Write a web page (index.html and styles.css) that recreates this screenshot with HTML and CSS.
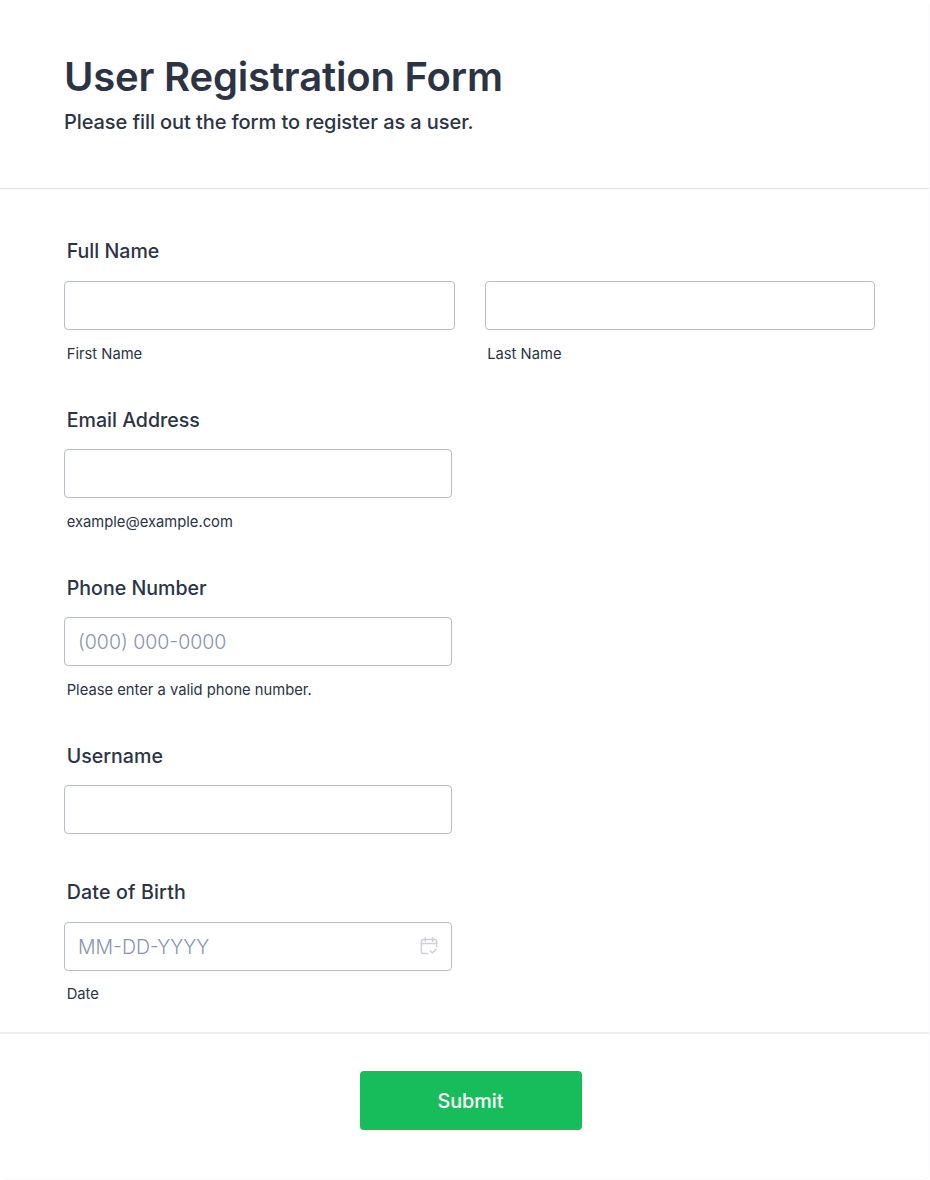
FILE: index.html
```html
<!DOCTYPE html>
<html lang="en">
<head>
    <meta charset="UTF-8">
    <meta name="viewport" content="width=device-width, initial-scale=1.0">
    <title>User Registration Form</title>
    <link rel="stylesheet" href="styles.css">
</head>
<body>
	<form class="form-card">
		<div class="form-header">
			<h1>User Registration Form</h1>
			<p>Please fill out the form to register as a user.</p>
		</div>

		<div class="form-body">
			<!-- name -->
			<div class="field first">
				<label class="field-label">Full Name</label>
				<div class="name-row">
					<div class="name-col">
						<input type="text" class="text-input">
						<span class="sub-label">First Name</span>
					</div>
					<div class="name-col">
						<input type="text" class="text-input">
						<span class="sub-label">Last Name</span>
					</div>
				</div>
			</div>

			<!-- email -->
			<div class="field">
				<label class="field-label">Email Address</label>
				<input type="email" class="text-input half">
				<span class="sub-label">example@example.com</span>
			</div>

			<!-- phone -->
			<div class="field">
				<label class="field-label">Phone Number</label>
				<input type="text" class="text-input half" placeholder="(000) 000-0000">
				<span class="sub-label">Please enter a valid phone number.</span>
			</div>

			<!-- username -->
			<div class="field no-sub">
				<label class="field-label">Username</label>
				<input type="text" class="text-input half">
			</div>

			<!-- date -->
			<div class="field last">
				<label class="field-label">Date of Birth</label>
				<div class="date-box">
					<input type="text" class="text-input" placeholder="MM-DD-YYYY">
					<svg class="date-icon" width="18" height="18" viewBox="0 0 18 18" fill="none" stroke="#ccd0da" stroke-width="1.5" stroke-linecap="round" stroke-linejoin="round">
						<path d="M7.5 16.4H3.4a2 2 0 0 1-2-2V4.4a2 2 0 0 1 2-2h11.2a2 2 0 0 1 2 2v5"/>
						<path d="M1.4 6.6h15.2"/>
						<path d="M5.4 .8v3.4M12.6 .8v3.4"/>
						<path d="M10.4 14l2 2 3.6-3.8"/>
					</svg>
				</div>
				<span class="sub-label">Date</span>
			</div>
		</div>

		<div class="form-footer">
			<button type="button" class="submit-btn">Submit</button>
		</div>
	</form>
</body>
</html>
```

FILE: styles.css
```css
* {box-sizing: border-box;}
html, body {margin: 0; padding: 0; background: #fff;}
body {font-family: Inter, "Noto Sans", sans-serif; color: #2c3345;}

.form-card {width: 930px; height: 1180px; background: #fff; border-radius: 6px; border-right: 1px solid #f9f9fd; border-bottom: 1px solid #f9f9fd;}

/* header */
.form-header {height: 189px; padding: 53px 64px 0; border-bottom: 1px solid #dcdfec;}
.form-header h1 {margin: 0; font-size: 40px; line-height: 48px; font-weight: 600; letter-spacing: -0.18px;}
.form-header p {margin: 8px 0 0; font-size: 20px; line-height: 26px; font-weight: 500; letter-spacing: -0.085px;}

/* fields */
.form-body {padding: 50px 54px 0 64px; height: 845px; border-bottom: 2px solid #eceef4;}
.field {height: 168px; padding-top: 1px;}
.field.first {padding-top: 0;}
.field.no-sub {height: 136px;}
.field-label {display: block; margin-left: 2.7px; margin-bottom: 17px; font-size: 19.6px; line-height: 24px; font-weight: 500;}
.field.first .field-label, .field.last .field-label {margin-bottom: 18px;}
.field.last .field-label {letter-spacing: .16px;}
.sub-label {display: block; margin: 15px 0 0 2.7px; font-size: 14.75px; line-height: 18px; font-weight: 400;}
.field.last .sub-label {margin-top: 14px;}

.name-row {display: flex; gap: 30px;}
.name-col {width: 390.5px;}

.text-input {display: block; width: 100%; height: 49px; padding: 0 13px; background: #fff; border: 1px solid #b8bdc9; border-radius: 4px; font-family: inherit; font-size: 19.5px; font-weight: 300; color: #2c3345; outline: 0;}
.text-input::placeholder {color: #8894ab; opacity: 1;}
.text-input.half, .date-box {width: 388px;}

.date-box {position: relative;}
.date-icon {position: absolute; top: 15px; right: 14px;}

/* submit */
.form-footer {display: flex; justify-content: center; padding: 37px 0 0 12px;}
.submit-btn {width: 222px; height: 59px; border: 0; border-radius: 4px; background: #18bd5b; color: #fff; font-family: inherit; font-size: 19.8px; font-weight: 500;}
```
